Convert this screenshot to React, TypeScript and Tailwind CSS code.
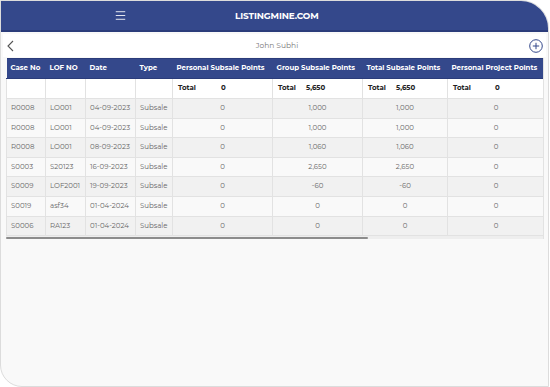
import { Menu } from "lucide-react";

const rows = [
  ["R0008", "LO001", "04-09-2023", "Subsale", "0", "1,000", "1,000", "0"],
  ["R0008", "LO001", "04-09-2023", "Subsale", "0", "1,000", "1,000", "0"],
  ["R0008", "LO001", "08-09-2023", "Subsale", "0", "1,060", "1,060", "0"],
  ["S0003", "S20123", "16-09-2023", "Subsale", "0", "2,650", "2,650", "0"],
  ["S0009", "LOF2001", "19-09-2023", "Subsale", "0", "-60", "-60", "0"],
  ["S0019", "asf34", "01-04-2024", "Subsale", "0", "0", "0", "0"],
  ["S0006", "RA123", "01-04-2024", "Subsale", "0", "0", "0", "0"],
];

const cols = ["Case No", "LOF NO", "Date", "Type", "Personal Subsale Points", "Group Subsale Points", "Total Subsale Points", "Personal Project Points", ""];
const widths = ["w-[39px]", "w-[40px]", "w-[50px]", "w-[37px]", "w-[100px]", "w-[90px]", "w-[85px]", "w-[97px]", "w-[260px]"];

export default function App() {
  return (
    <div className="w-[550px] h-[387px] bg-white font-['Montserrat','Inter',sans-serif]">
      <div className="w-[549px] h-[387px] bg-[#f9f9f9] border border-[#dcdcdc] rounded-tr-[28px] rounded-bl-[22px] overflow-hidden flex flex-col">
        {/* header */}
        <div className="h-[31px] bg-[#34488b] border-b-2 border-[#2b3c7a] flex items-center shrink-0">
          <div className="w-[234px] flex justify-center pl-[5px]">
            <Menu size={13} strokeWidth={1.6} color="#ffffff" />
          </div>
          <div className="text-white text-[8.9px] font-bold tracking-[-0.1px]">LISTINGMINE.COM</div>
        </div>
        {/* sub header */}
        <div className="mt-[2px] mx-[2px] h-[23px] bg-white flex items-center justify-between px-[3px] shrink-0">
          <svg width="9" height="12" viewBox="0 0 9 12" fill="none" stroke="#555" strokeWidth="1.1">
            <path d="M7 1 L2 6 L7 11" />
          </svg>
          <span className="text-[7.5px] text-[#777] ml-[10px]">John Subhi</span>
          <svg width="14" height="14" viewBox="0 0 14 14" fill="none" stroke="#34488b" strokeWidth="1">
            <circle cx="7" cy="7" r="6.3" />
            <path d="M7 3.8 V10.2 M3.8 7 H10.2" />
          </svg>
        </div>
        {/* table */}
        <div className="mx-[5px] mt-[1px] w-[538px] overflow-hidden border-r border-[#e2e2e2]">
          <table className="border-collapse table-fixed w-[798px] text-[7px]">
            <thead>
              <tr className="bg-[#34488b] text-white h-[20px]">
                {cols.map((c, i) => (
                  <th key={i} className={`${widths[i]} text-left font-bold px-[4px] whitespace-nowrap border-y border-[#2b3c7a]`}>
                    {c}
                  </th>
                ))}
              </tr>
            </thead>
            <tbody>
              <tr className="bg-white h-[20px] font-bold text-[#222]">
                <td className="border border-[#e2e2e2]" />
                <td className="border border-[#e2e2e2]" />
                <td className="border border-[#e2e2e2]" />
                <td className="border border-[#e2e2e2]" />
                <td className="border border-[#e2e2e2] px-[5px]">
                  <div className="flex"><span className="w-[43px]">Total</span><span>0</span></div>
                </td>
                <td className="border border-[#e2e2e2] px-[5px]">
                  <div className="flex"><span className="w-[28px]">Total</span><span>5,650</span></div>
                </td>
                <td className="border border-[#e2e2e2] px-[5px]">
                  <div className="flex"><span className="w-[28px]">Total</span><span>5,650</span></div>
                </td>
                <td className="border border-[#e2e2e2] px-[5px]">
                  <div className="flex"><span className="w-[42px]">Total</span><span>0</span></div>
                </td>
                <td className="border border-[#e2e2e2]" />
              </tr>
              {rows.map((r, ri) => (
                <tr key={ri} className={`h-[19.6px] text-[#666] ${ri % 2 === 0 ? "bg-[#f1f1f1]" : "bg-[#f9f9f9]"}`}>
                  {r.map((v, ci) => (
                    <td
                      key={ci}
                      className={`border border-[#e2e2e2] whitespace-nowrap ${ci < 4 ? "text-left px-[4px]" : "text-center"}`}
                    >
                      {v}
                    </td>
                  ))}
                  <td className="border border-[#e2e2e2]" />
                </tr>
              ))}
            </tbody>
          </table>
          {/* horizontal scrollbar */}
          <div className="h-[3px] bg-[#eeeeee] flex items-center">
            <div className="w-[362px] h-[2px] bg-[#8c8c8c] rounded-full" />
          </div>
        </div>
      </div>
    </div>
  );
}
